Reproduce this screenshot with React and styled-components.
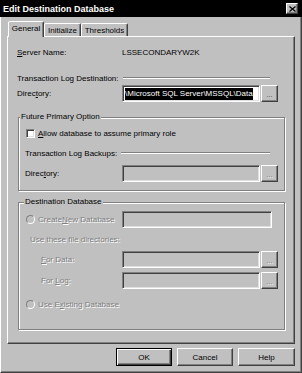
import styled, { createGlobalStyle, css } from "styled-components";

const GlobalStyle = createGlobalStyle`
  html, body {
    margin: 0;
    padding: 0;
    background: #c0c0c0;
  }
  body {
    font-family: "Liberation Sans", Arial, sans-serif;
    font-size: 8px;
    color: #000;
  }
`;

const Window = styled.div`
  width: 302px;
  height: 373px;
  display: flex;
  flex-direction: column;
  background: #c0c0c0;
  overflow: hidden;
`;

const TitleBar = styled.div`
  height: 17px;
  flex: none;
  background: #000;
  color: #fff;
  display: flex;
  align-items: center;
  padding: 0 4px 0 3px;
  box-sizing: border-box;
`;

const Title = styled.span`
  flex: 1;
  font-size: 9px;
  font-weight: bold;
`;

const CloseButton = styled.span`
  width: 12px;
  height: 11px;
  box-sizing: border-box;
  background: #c0c0c0;
  border: 1px solid;
  border-color: #fff #404040 #404040 #fff;
  box-shadow: inset -1px -1px 0 #808080;
  display: flex;
  align-items: center;
  justify-content: center;
`;

const Body = styled.div`
  flex: 1;
  border-left: 1px solid #fff;
  border-right: 1px solid #404040;
  border-bottom: 1px solid #404040;
  box-shadow: inset -1px -1px 0 #808080;
  padding-left: 6px;
  display: flex;
  flex-direction: column;
`;

const TabBar = styled.div`
  margin-top: 4px;
  height: 15px;
  padding-left: 1px;
  display: flex;
  align-items: flex-end;
`;

const Tab = styled.div`
  width: ${(p) => p.$w}px;
  height: 13px;
  box-sizing: border-box;
  border: 1px solid;
  border-bottom: 0;
  border-color: #fff #404040 transparent #fff;
  border-radius: 2px 2px 0 0;
  box-shadow: inset -1px 0 0 #808080;
  display: flex;
  align-items: center;
  justify-content: center;
  background: #c0c0c0;
  ${(p) =>
    p.$active &&
    css`
      height: 16px;
      margin-bottom: -1px;
      position: relative;
      z-index: 1;
      padding-bottom: 2px;
    `}
`;

const Panel = styled.div`
  width: 288px;
  height: 308px;
  box-sizing: border-box;
  border: 1px solid;
  border-color: #fff #404040 #404040 #fff;
  box-shadow: inset -1px -1px 0 #808080;
  padding-top: 9px;
  display: flex;
  flex-direction: column;
`;

const Row = styled.div`
  display: flex;
  align-items: center;
  height: ${(p) => p.$h || 12}px;
  margin-top: ${(p) => p.$mt || 0}px;
  padding-left: ${(p) => p.$pl ?? 9}px;
  padding-right: ${(p) => p.$pr || 0}px;
`;

const Label = styled.span`
  width: ${(p) => p.$w || 105}px;
  flex: none;
  white-space: nowrap;
  ${(p) =>
    p.$disabled &&
    css`
      color: #808080;
      text-shadow: 1px 1px 0 #fff;
    `}
`;

const Text = styled.span`
  white-space: nowrap;
  ${(p) =>
    p.$disabled &&
    css`
      color: #808080;
      text-shadow: 1px 1px 0 #fff;
    `}
`;

const Etch = styled.div`
  flex: 1;
  height: 0;
  margin-left: 4px;
  border-top: 1px solid #808080;
  border-bottom: 1px solid #fff;
`;

const Field = styled.div`
  width: ${(p) => p.$w || 138}px;
  height: 17px;
  box-sizing: border-box;
  flex: none;
  border: 1px solid;
  border-color: #808080 #fff #fff #808080;
  box-shadow: inset 1px 1px 0 #404040, inset -1px -1px 0 #dfdfdf;
  background: ${(p) => (p.$disabled ? "#c0c0c0" : "#fff")};
  overflow: hidden;
  white-space: nowrap;
  display: flex;
  align-items: center;
  padding-left: 2px;
`;

const Selected = styled.span`
  background: #000;
  color: #fff;
  line-height: 12px;
`;

const Browse = styled.div`
  width: 17px;
  height: 17px;
  box-sizing: border-box;
  margin-left: 1px;
  flex: none;
  border: 1px solid;
  border-color: #fff #404040 #404040 #fff;
  box-shadow: inset -1px -1px 0 #808080;
  display: flex;
  align-items: center;
  justify-content: center;
  padding-top: 2px;
  font-size: 7px;
  color: ${(p) => (p.$disabled ? "#808080" : "#404040")};
  text-shadow: ${(p) => (p.$disabled ? "1px 1px 0 #fff" : "none")};
`;

const Group = styled.div`
  position: relative;
  margin-left: 10px;
  margin-top: ${(p) => p.$mt}px;
  width: 267px;
  box-sizing: border-box;
  border: 1px solid #808080;
  box-shadow: inset 1px 1px 0 #fff, 1px 1px 0 #fff;
  padding-top: ${(p) => p.$pt}px;
  padding-bottom: ${(p) => p.$pb}px;
  display: flex;
  flex-direction: column;
`;

const GroupTitle = styled.span`
  position: absolute;
  top: -6px;
  left: ${(p) => p.$left}px;
  line-height: 10px;
  padding: 0 1px;
  background: #c0c0c0;
  white-space: nowrap;
`;

const Check = styled.span`
  width: 9px;
  height: 9px;
  box-sizing: border-box;
  flex: none;
  border: 1px solid;
  border-color: #808080 #fff #fff #808080;
  box-shadow: inset 1px 1px 0 #404040, inset -1px -1px 0 #dfdfdf;
  background: #fff;
  margin-right: 3px;
`;

const Radio = styled.span`
  width: 9px;
  height: 9px;
  box-sizing: border-box;
  flex: none;
  border-radius: 50%;
  border: 1px solid;
  border-color: #808080 #fff #fff #808080;
  background: #c0c0c0;
  margin-right: 3px;
`;

const ButtonRow = styled.div`
  margin-top: 4px;
  width: 288px;
  display: flex;
  justify-content: flex-end;
  gap: 5px;
`;

const Button = styled.div`
  width: ${(p) => p.$w || 56}px;
  height: 18px;
  box-sizing: border-box;
  border: 1px solid;
  border-color: #fff #404040 #404040 #fff;
  box-shadow: inset -1px -1px 0 #808080;
  display: flex;
  align-items: center;
  justify-content: center;
  ${(p) =>
    p.$default &&
    css`
      border-color: #000;
      box-shadow: inset 1px 1px 0 #fff, inset -1px -1px 0 #404040,
        inset -2px -2px 0 #808080;
    `}
`;

const U = styled.span`
  text-decoration: underline;
`;

const CloseIcon = () => (
  <svg width="7" height="6" viewBox="0 0 7 6">
    <path d="M0.5 0.5 L6.5 5.5 M6.5 0.5 L0.5 5.5" stroke="#000" strokeWidth="1.3" />
  </svg>
);

export default function App() {
  return (
    <>
      <GlobalStyle />
      <Window>
        <TitleBar>
          <Title>Edit Destination Database</Title>
          <CloseButton>
            <CloseIcon />
          </CloseButton>
        </TitleBar>
        <Body>
          <TabBar>
            <Tab $w={36} $active>General</Tab>
            <Tab $w={37}>Initialize</Tab>
            <Tab $w={47}>Thresholds</Tab>
          </TabBar>
          <Panel>
            <Row>
              <Label>
                <U>S</U>erver Name:
              </Label>
              <Text>LSSECONDARYW2K</Text>
            </Row>
            <Row $mt={14} $pr={24}>
              <Text>Transaction Log Destination:</Text>
              <Etch />
            </Row>
            <Row $mt={1} $h={17}>
              <Label>
                Direc<U>t</U>ory:
              </Label>
              <Field>
                <Selected>\Microsoft SQL Server\MSSQL\Data</Selected>
              </Field>
              <Browse>...</Browse>
            </Row>

            <Group $mt={15} $pt={9} $pb={8}>
              <GroupTitle $left={1}>Future Primary Option</GroupTitle>
              <Row $h={13} $pl={7}>
                <Check />
                <Text>
                  <U>A</U>llow database to assume primary role
                </Text>
              </Row>
              <Row $mt={7} $pl={6} $pr={14}>
                <Text>Transaction Log Backups:</Text>
                <Etch />
              </Row>
              <Row $mt={6} $h={17} $pl={6}>
                <Label $w={97}>
                  Direc<U>t</U>ory:
                </Label>
                <Field $disabled />
                <Browse $disabled>...</Browse>
              </Row>
            </Group>

            <Group $mt={11} $pt={8} $pb={19}>
              <GroupTitle $left={5}>Destination Database</GroupTitle>
              <Row $h={17} $pl={7}>
                <Label $w={96} $disabled style={{ display: "flex", alignItems: "center" }}>
                  <Radio />
                  Create <U>N</U>ew Database
                </Label>
                <Field $w={150} $disabled />
              </Row>
              <Row $mt={5} $pl={11}>
                <Text $disabled>Use these file directories:</Text>
              </Row>
              <Row $mt={6} $h={17} $pl={22}>
                <Label $w={81} $disabled>
                  <U>F</U>or Data:
                </Label>
                <Field $disabled />
                <Browse $disabled>...</Browse>
              </Row>
              <Row $mt={4} $h={17} $pl={22}>
                <Label $w={81} $disabled>
                  For <U>L</U>og:
                </Label>
                <Field $disabled />
                <Browse $disabled>...</Browse>
              </Row>
              <Row $mt={9} $pl={7}>
                <Radio />
                <Text $disabled>
                  Use E<U>x</U>isting Database
                </Text>
              </Row>
            </Group>
          </Panel>
          <ButtonRow>
            <Button $default>OK</Button>
            <Button>Cancel</Button>
            <Button $w={57}>Help</Button>
          </ButtonRow>
        </Body>
      </Window>
    </>
  );
}
